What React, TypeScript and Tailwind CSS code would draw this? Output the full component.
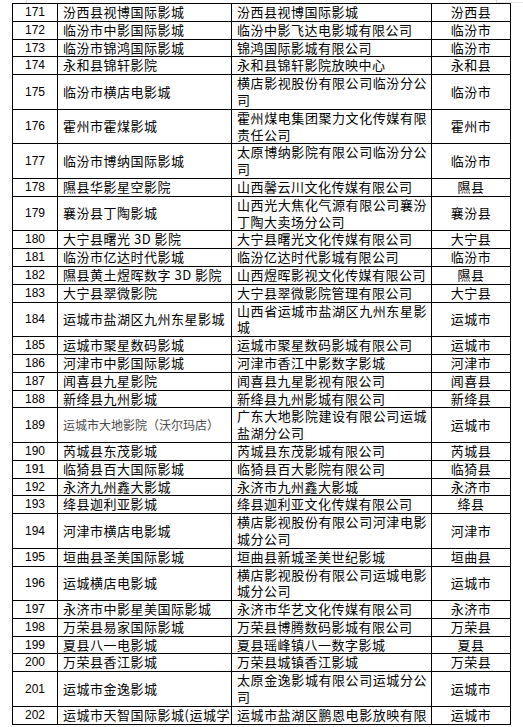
import React from "react";

type Row = { no: number; cinema: string; company: string; county: string; muted?: boolean };

const rows: Row[] = [
  { no: 171, cinema: "汾西县视博国际影城", company: "汾西县视博国际影城", county: "汾西县" },
  { no: 172, cinema: "临汾市中影国际影城", company: "临汾中影飞达电影城有限公司", county: "临汾市" },
  { no: 173, cinema: "临汾市锦鸿国际影城", company: "锦鸿国际影城有限公司", county: "临汾市" },
  { no: 174, cinema: "永和县锦轩影院", company: "永和县锦轩影院放映中心", county: "永和县" },
  { no: 175, cinema: "临汾市横店电影城", company: "横店影视股份有限公司临汾分公司", county: "临汾市" },
  { no: 176, cinema: "霍州市霍煤影城", company: "霍州煤电集团聚力文化传媒有限责任公司", county: "霍州市" },
  { no: 177, cinema: "临汾市博纳国际影城", company: "太原博纳影院有限公司临汾分公司", county: "临汾市" },
  { no: 178, cinema: "隰县华影星空影院", company: "山西馨云川文化传媒有限公司", county: "隰县" },
  { no: 179, cinema: "襄汾县丁陶影城", company: "山西光大焦化气源有限公司襄汾丁陶大卖场分公司", county: "襄汾县" },
  { no: 180, cinema: "大宁县曙光 3D 影院", company: "大宁县曙光文化传媒有限公司", county: "大宁县" },
  { no: 181, cinema: "临汾市亿达时代影城", company: "临汾亿达时代影城有限公司", county: "临汾市" },
  { no: 182, cinema: "隰县黄土煜晖数字 3D 影院", company: "山西煜晖影视文化传媒有限公司", county: "隰县" },
  { no: 183, cinema: "大宁县翠微影院", company: "大宁县翠微影院管理有限公司", county: "大宁县" },
  { no: 184, cinema: "运城市盐湖区九州东星影城", company: "山西省运城市盐湖区九州东星影城", county: "运城市" },
  { no: 185, cinema: "运城市聚星数码影城", company: "运城市聚星数码影城有限公司", county: "运城市" },
  { no: 186, cinema: "河津市中影国际影城", company: "河津市香江中影数字影城", county: "河津市" },
  { no: 187, cinema: "闻喜县九星影院", company: "闻喜县九星影视有限公司", county: "闻喜县" },
  { no: 188, cinema: "新绛县九州影城", company: "新绛县九州影城有限公司", county: "新绛县" },
  { no: 189, cinema: "运城市大地影院（沃尔玛店）", company: "广东大地影院建设有限公司运城盐湖分公司", county: "运城市", muted: true },
  { no: 190, cinema: "芮城县东茂影城", company: "芮城县东茂影城有限公司", county: "芮城县" },
  { no: 191, cinema: "临猗县百大国际影城", company: "临猗县百大影院有限公司", county: "临猗县" },
  { no: 192, cinema: "永济九州鑫大影城", company: "永济市九州鑫大影城", county: "永济市" },
  { no: 193, cinema: "绛县迦利亚影城", company: "绛县迦利亚文化传媒有限公司", county: "绛县" },
  { no: 194, cinema: "河津市横店电影城", company: "横店影视股份有限公司河津电影城分公司", county: "河津市" },
  { no: 195, cinema: "垣曲县圣美国际影城", company: "垣曲县新城圣美世纪影城", county: "垣曲县" },
  { no: 196, cinema: "运城横店电影城", company: "横店影视股份有限公司运城电影城分公司", county: "运城市" },
  { no: 197, cinema: "永济市中影星美国际影城", company: "永济市华艺文化传媒有限公司", county: "永济市" },
  { no: 198, cinema: "万荣县易家国际影城", company: "万荣县博腾数码影城有限公司", county: "万荣县" },
  { no: 199, cinema: "夏县八一电影城", company: "夏县瑶峰镇八一数字影城", county: "夏县" },
  { no: 200, cinema: "万荣县香江影城", company: "万荣县城镇香江影城", county: "万荣县" },
  { no: 201, cinema: "运城市金逸影城", company: "太原金逸影城有限公司运城分公司", county: "运城市" },
];

// the last row is cut off by the page edge, only its first line shows
const lastRow: Row = { no: 202, cinema: "运城市天智国际影城(运城学院店)", company: "运城市盐湖区鹏恩电影放映有限公司", county: "运城市" };

const cjk = "font-['Noto_Sans_CJK_SC',sans-serif]";
const cell = "border border-black p-0 align-middle leading-[16.8px]";

export default function App() {
  return (
    <div className="w-[523px] h-[727px] bg-white overflow-hidden text-black">
      {/* page corner marks */}
      <div className="flex h-[3px]">
        <div className="w-[26px]" />
        <div className="w-px bg-gray-300" />
        <div className="w-[469px]" />
        <div className="w-px bg-gray-300" />
        <div className="flex-1 self-end h-px bg-gray-200" />
      </div>

      <table className="ml-[12px] w-[498px] table-fixed border-collapse">
        <colgroup>
          <col className="w-[45px]" />
          <col className="w-[174px]" />
          <col className="w-[200px]" />
          <col className="w-[79px]" />
        </colgroup>
        <tbody>
          {rows.map((r) => (
            <tr key={r.no}>
              <td className={`${cell} text-center font-['Liberation_Sans',sans-serif] text-[12px]`}>{r.no}</td>
              <td
                className={`${cell} ${cjk} pl-[5px] pr-[4px] ${
                  r.muted ? "text-[12px] text-[#4a4a4a]" : "text-[13px] tracking-[0.5px]"
                }`}
              >
                {r.cinema}
              </td>
              <td className={`${cell} ${cjk} text-[13px] tracking-[0.5px] pl-[5px] pr-[4px] text-justify`}>
                {r.company}
              </td>
              <td className={`${cell} ${cjk} text-[13px] tracking-[0.5px] text-center`}>{r.county}</td>
            </tr>
          ))}
          <tr>
            <td className={`${cell} text-center font-['Liberation_Sans',sans-serif] text-[12px]`}>
              <div className="h-[17px] overflow-hidden">{lastRow.no}</div>
            </td>
            <td className={`${cell} ${cjk} text-[13px] tracking-[0.5px] pl-[5px] pr-[1px]`}>
              <div className="h-[17px] overflow-hidden whitespace-nowrap">{lastRow.cinema}</div>
            </td>
            <td className={`${cell} ${cjk} text-[13px] tracking-[0.5px] pl-[5px] pr-[4px]`}>
              <div className="h-[17px] overflow-hidden text-justify">{lastRow.company}</div>
            </td>
            <td className={`${cell} ${cjk} text-[13px] tracking-[0.5px] text-center`}>
              <div className="h-[17px] overflow-hidden">{lastRow.county}</div>
            </td>
          </tr>
        </tbody>
      </table>
    </div>
  );
}
